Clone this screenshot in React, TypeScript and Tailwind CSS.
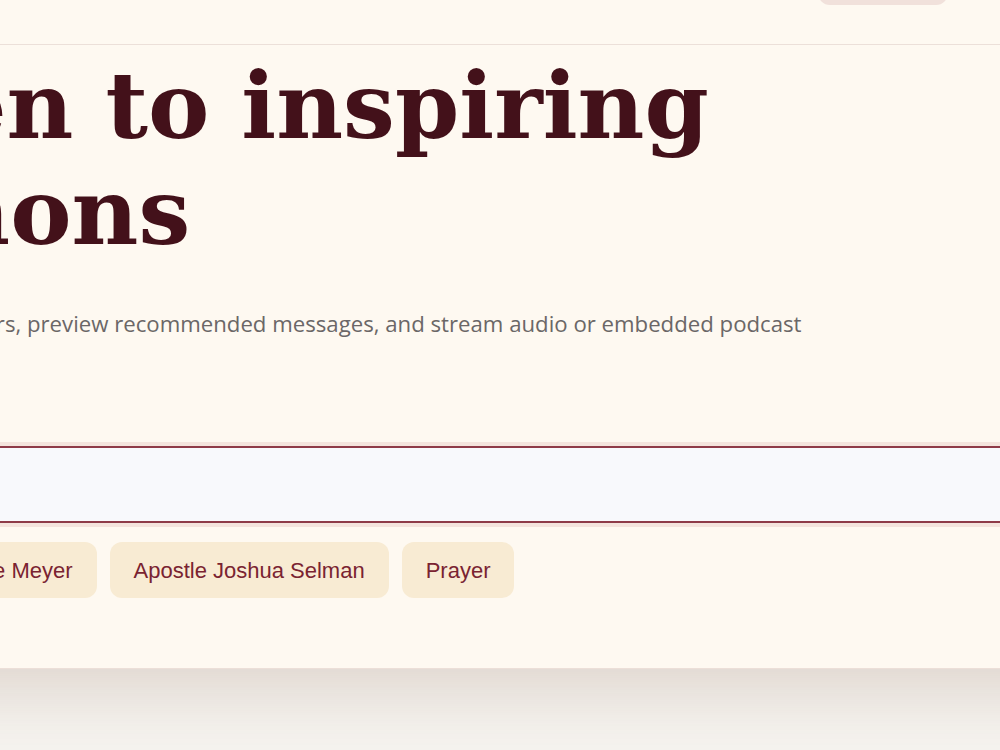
import React from "react";

export default function App() {
  const chips = ["T. D. Jakes", "Joyce Meyer", "Apostle Joshua Selman", "Prayer"];
  return (
    <div className="h-[750px] w-[1000px] overflow-hidden bg-[#f5f3ef]">
      <div className="-ml-[286px] -mt-[55px] w-[1412px] border-b border-[#ecdfd8] bg-[#fef9f1] px-10 pb-[70px] shadow-[0_24px_60px_rgba(110,60,40,0.16)]">
        <header className="flex items-center justify-between border-b border-[#ece0d9] pt-4 pr-[138px] pb-[39px]">
          <div className="w-[200px] font-['Georgia','DejaVu_Serif',serif] text-2xl font-bold text-[#43111a]">
            Sermonly
          </div>
          <button className="h-[44px] w-[130px] rounded-xl bg-[#f1e1db] font-['Liberation_Sans',Arial,sans-serif] text-base text-[#7a2331]">
            Sign in
          </button>
        </header>

        <h1 className="mt-[8px] font-['Georgia','DejaVu_Serif',serif] text-[92px] font-bold leading-[106px] text-[#43111a]">
          Listen to inspiring
          <br />
          sermons
        </h1>

        <p className="mt-[43px] max-w-[1100px] font-['Open_Sans','Noto_Sans',sans-serif] text-[22.2px] leading-[32px] text-[#6b6767]">
          Explore favorite speakers, preview recommended messages, and stream audio or embedded podcast episodes.
        </p>

        <div className="mt-[74px] h-[77px] w-full rounded-xl border-2 border-[#8e3b48] bg-[#f8f9fc] ring-4 ring-[#f4e4dd]">
          <input
            className="h-full w-full bg-transparent px-5 font-['Liberation_Sans',Arial,sans-serif] text-xl outline-none"
            aria-label="Search sermons"
          />
        </div>

        <div className="mt-[19px] flex gap-[13px]">
          {chips.map((c) => (
            <button
              key={c}
              className="h-[56px] rounded-xl bg-[#f8ebd3] px-[24px] font-['Liberation_Sans',Arial,sans-serif] text-[22px] text-[#7a2331]"
            >
              {c}
            </button>
          ))}
        </div>
      </div>
    </div>
  );
}
